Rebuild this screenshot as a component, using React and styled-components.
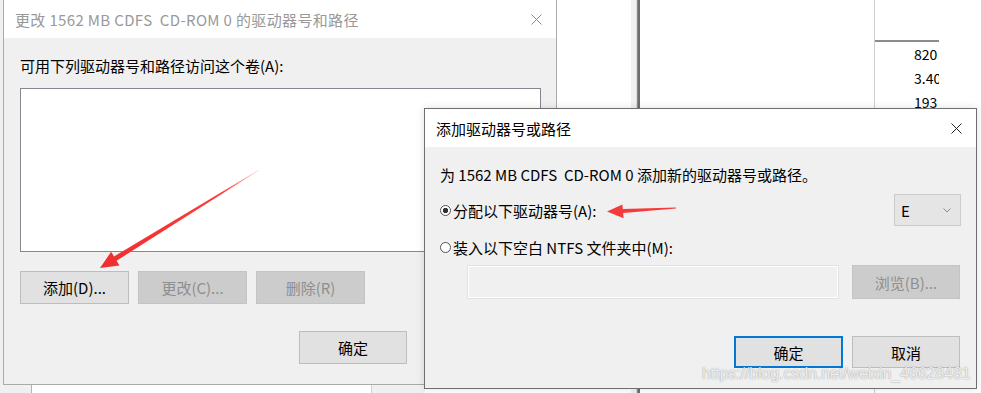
import React from 'react'
import styled, { createGlobalStyle } from 'styled-components'

const GlobalStyle = createGlobalStyle`
  html, body {
    margin: 0;
    padding: 0;
    background: #ffffff;
  }
  body {
    font-family: "Noto Sans CJK SC", "Noto Sans", sans-serif;
    font-size: 15px;
    color: #000000;
  }
`

const Desktop = styled.div`
  position: relative;
  width: 981px;
  height: 393px;
  overflow: hidden;
  background: #ffffff;
`

// windows that sit behind the dialogs
const BackWindow = styled.div`
  position: absolute;
  left: -20px;
  top: 0;
  width: 445px;
  height: 393px;
  background: #f0f0f0;
  display: flex;
  flex-direction: column;
  justify-content: flex-end;
  padding-left: 51px;
  box-sizing: border-box;
`

const BackField = styled.div`
  width: 339px;
  height: 8px;
  background: #ffffff;
  border-top: 1px solid #b4b4b4;
  border-left: 1px solid #b4b4b4;
  border-right: 1px solid #d0d0d0;
`

const ScrollBand = styled.div`
  position: absolute;
  left: 631px;
  top: 0;
  width: 9px;
  height: 393px;
  background: linear-gradient(to right, #f2f2f2 0 5px, #dcdcdc 5px 6px, #8a8a8a 6px 7px, #6e6e6e 7px 9px);
`

const SizeColumn = styled.div`
  position: absolute;
  left: 874px;
  top: 0;
  width: 64px;
  height: 393px;
  border-left: 1px solid #cfcfcf;
  overflow: hidden;
  display: flex;
  flex-direction: column;
  font-size: 14px;
`

const ColumnHead = styled.div`
  height: 40px;
  border-bottom: 2px solid #8c8c8c;
  flex-shrink: 0;
`

const ColumnCell = styled.div`
  height: 24px;
  line-height: 24px;
  padding-left: 39px;
  white-space: nowrap;
  color: #000;
  &:first-of-type {
    margin-top: 2px;
  }
`

const Dialog = styled.div`
  position: absolute;
  left: ${(p) => p.$left}px;
  top: ${(p) => p.$top}px;
  width: ${(p) => p.$width}px;
  height: ${(p) => p.$height}px;
  box-sizing: border-box;
  border: 1px solid ${(p) => (p.$active ? '#6f6f6f' : '#aaaaaa')};
  background: #f0f0f0;
  display: flex;
  flex-direction: column;
  box-shadow: ${(p) => (p.$active ? '0 0 8px rgba(0,0,0,0.12)' : 'none')};
`

const TitleBar = styled.div`
  height: 38px;
  flex-shrink: 0;
  background: #ffffff;
  display: flex;
  align-items: center;
  justify-content: space-between;
  padding-left: 11px;
  color: ${(p) => (p.$active ? '#000000' : '#999999')};
  font-size: 15px;
`

const TitleText = styled.span`
  white-space: pre;
  letter-spacing: ${(p) => p.$spacing || 0}px;
`

const CloseBox = styled.div`
  width: 40px;
  height: 38px;
  display: flex;
  align-items: center;
  justify-content: center;
`

const Body = styled.div`
  display: flex;
  flex-direction: column;
  padding: 18px 15px 0 ${(p) => p.$padLeft || 15}px;
`

const Line = styled.div`
  height: 20px;
  line-height: 20px;
  white-space: pre;
  margin-top: ${(p) => p.$mt || 0}px;
`

const ListBox = styled.div`
  margin-top: 12px;
  width: 521px;
  height: 164px;
  box-sizing: border-box;
  border: 1px solid #828790;
  background: #ffffff;
`

const Row = styled.div`
  display: flex;
  align-items: center;
  gap: ${(p) => p.$gap || 0}px;
  margin-top: ${(p) => p.$mt || 0}px;
  padding-left: ${(p) => p.$pl || 0}px;
  padding-right: ${(p) => p.$pr || 0}px;
  justify-content: ${(p) => p.$justify || 'flex-start'};
`

const Button = styled.div`
  width: ${(p) => p.$w || 109}px;
  height: ${(p) => p.$h || 33}px;
  box-sizing: border-box;
  display: flex;
  align-items: center;
  justify-content: center;
  flex-shrink: 0;
  background: ${(p) => (p.$disabled ? '#cccccc' : '#e1e1e1')};
  border: 1px solid ${(p) => (p.$disabled ? '#c4c4c4' : p.$default ? '#0078d7' : '#bdbdbd')};
  box-shadow: ${(p) => (p.$default ? 'inset 0 0 0 1px #0078d7' : 'none')};
  color: ${(p) => (p.$disabled ? '#8f8f8f' : '#000000')};
  font-size: 15px;
`

const RadioLabel = styled.div`
  display: flex;
  align-items: center;
  height: 20px;
  gap: 2px;
  white-space: pre;
`

const RadioDot = styled.span`
  width: 11px;
  height: 11px;
  box-sizing: border-box;
  border-radius: 50%;
  border: 1px solid #555555;
  background: ${(p) => (p.$checked ? 'radial-gradient(circle, #333 0 2.3px, #fff 3px)' : '#ffffff')};
`

const Select = styled.div`
  width: 67px;
  height: 32px;
  box-sizing: border-box;
  background: #e5e5e5;
  border: 1px solid #cccccc;
  display: flex;
  align-items: center;
  justify-content: space-between;
  padding: 0 9px 0 6px;
`

const TextField = styled.div`
  width: 372px;
  height: 34px;
  box-sizing: border-box;
  background: #f0f0f0;
  border: 1px solid #e2e2e2;
  box-shadow: inset 0 0 0 1px #ffffff;
`

const Overlay = styled.svg`
  position: absolute;
  left: 0;
  top: 0;
  pointer-events: none;
`

const Watermark = styled.div`
  position: absolute;
  left: 702px;
  top: 363px;
  font-family: "Liberation Sans", Arial, sans-serif;
  font-size: 16px;
  line-height: 22px;
  color: rgba(255, 255, 255, 0.85);
  text-shadow: 0 0 1px rgba(0, 0, 0, 0.35), 0 0 2px rgba(0, 0, 0, 0.15);
  letter-spacing: -0.1px;
  white-space: nowrap;
`

const CloseIcon = ({ color }) => (
  <svg width="11" height="11" viewBox="0 0 11 11">
    <path d="M0.5 0.5 L10.5 10.5 M10.5 0.5 L0.5 10.5" stroke={color} strokeWidth="1" fill="none" />
  </svg>
)

const Chevron = () => (
  <svg width="8" height="5" viewBox="0 0 8 5">
    <path d="M0.5 0.5 L4 4 L7.5 0.5" stroke="#8a8a8a" strokeWidth="1" fill="none" />
  </svg>
)

export default function App() {
  return (
    <>
      <GlobalStyle />
      <Desktop>
        <BackWindow>
          <BackField />
        </BackWindow>
        <ScrollBand />
        <SizeColumn>
          <ColumnHead />
          <ColumnCell>820</ColumnCell>
          <ColumnCell>3.40</ColumnCell>
          <ColumnCell>193</ColumnCell>
        </SizeColumn>

        <Dialog $left={3} $top={-1} $width={554} $height={386}>
          <TitleBar>
            <TitleText $spacing={0.35}>{'更改 1562 MB CDFS  CD-ROM 0 的驱动器号和路径'}</TitleText>
            <CloseBox>
              <CloseIcon color="#8a8a8a" />
            </CloseBox>
          </TitleBar>
          <Body $padLeft={16}>
            <Line>可用下列驱动器号和路径访问这个卷(A):</Line>
            <ListBox />
            <Row $mt={19} $gap={9}>
              <Button>添加(D)...</Button>
              <Button $disabled>更改(C)...</Button>
              <Button $disabled>删除(R)</Button>
            </Row>
            <Row $mt={27} $pl={279}>
              <Button $w={108}>确定</Button>
            </Row>
          </Body>
        </Dialog>

        <Dialog $active $left={424} $top={108} $width={553} $height={281}>
          <TitleBar $active>
            <TitleText>添加驱动器号或路径</TitleText>
            <CloseBox>
              <CloseIcon color="#222222" />
            </CloseBox>
          </TitleBar>
          <Body>
            <Line>{'为 1562 MB CDFS  CD-ROM 0 添加新的驱动器号或路径。'}</Line>
            <Row $mt={9} $justify="space-between">
              <RadioLabel>
                <RadioDot $checked />
                分配以下驱动器号(A):
              </RadioLabel>
              <Select>
                E
                <Chevron />
              </Select>
            </Row>
            <Row $mt={11}>
              <RadioLabel>
                <RadioDot />
                装入以下空白 NTFS 文件夹中(M):
              </RadioLabel>
            </Row>
            <Row $mt={8} $pl={27} $gap={13}>
              <TextField />
              <Button $disabled $w={108} $h={34}>浏览(B)...</Button>
            </Row>
            <Row $mt={37} $gap={9} $justify="flex-end" $pr={1}>
              <Button $default $w={109} $h={32}>确定</Button>
              <Button $w={108} $h={32}>取消</Button>
            </Row>
          </Body>
        </Dialog>

        <Overlay width="981" height="393" viewBox="0 0 981 393">
          <defs>
            <linearGradient id="fade1" x1="259" y1="170" x2="110" y2="262" gradientUnits="userSpaceOnUse">
              <stop offset="0" stopColor="#ff3a3a" stopOpacity="0.2" />
              <stop offset="0.25" stopColor="#ff3a3a" stopOpacity="1" />
              <stop offset="1" stopColor="#f03030" stopOpacity="1" />
            </linearGradient>
          </defs>
          <polygon
            points="259.2,170.3 258.8,169.7 114.0,256.5 111.1,251.8 100,268 119.5,265.4 116.6,260.7"
            fill="url(#fade1)"
          />
          <polygon
            points="676,207.6 676,208.6 623.2,213.1 623.6,218.2 607,211.5 622.4,204.4 622.8,209.1"
            fill="#f43a3a"
          />
        </Overlay>

        <Watermark>https://blog.csdn.net/weixin_46628481</Watermark>
      </Desktop>
    </>
  )
}
